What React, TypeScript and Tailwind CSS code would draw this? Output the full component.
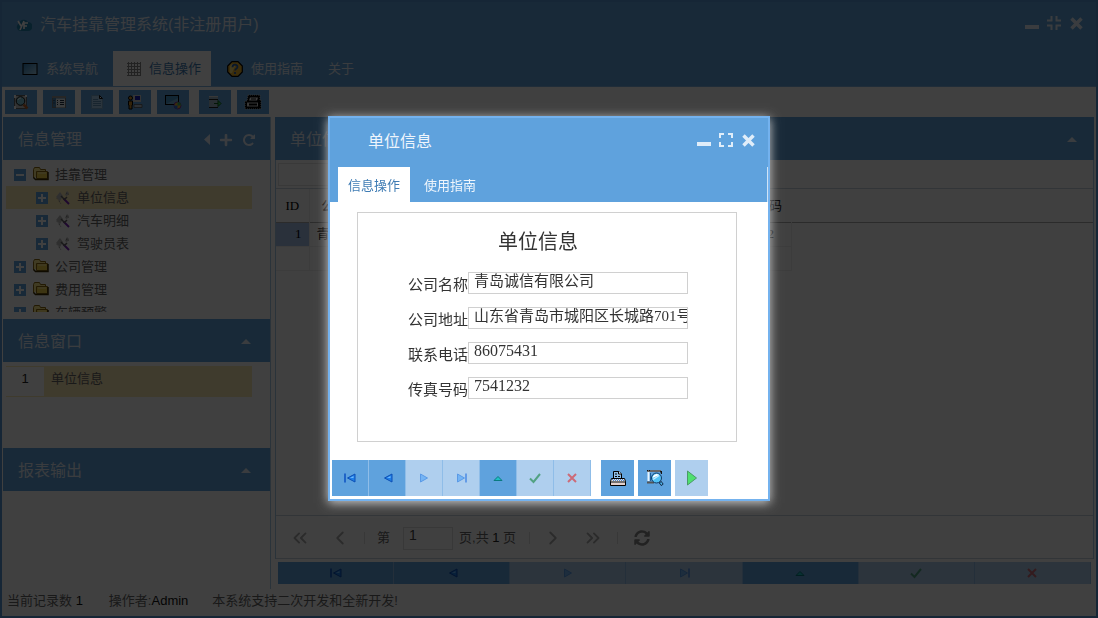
import React from 'react'
import clsx from 'clsx'
import { ChevronLeft, ChevronRight, ChevronsLeft, ChevronsRight } from 'lucide-react'
import { FaPlus, FaSyncAlt } from 'react-icons/fa'

const sans = "font-['Liberation_Sans','Noto_Sans_CJK_SC',sans-serif]"
const serif = "font-['Liberation_Serif','Noto_Sans_CJK_SC',serif]"

/* ---------- icons ---------- */

function MinimizeIcon() {
  return (
    <svg width="16" height="16" viewBox="0 0 16 16" aria-hidden="true">
      <rect x="1" y="10" width="14" height="4" fill="currentColor" />
    </svg>
  )
}

function ExpandIcon() {
  return (
    <svg width="16" height="16" viewBox="0 0 16 16" fill="none" stroke="currentColor" strokeWidth="2" aria-hidden="true">
      <path d="M6 2H2v4M10 2h4v4M6 14H2v-4M10 14h4v-4" />
    </svg>
  )
}

function RestoreIcon() {
  return (
    <svg width="16" height="16" viewBox="0 0 16 16" fill="none" stroke="currentColor" strokeWidth="2" aria-hidden="true">
      <path d="M1 5.500h4.500V1M15 5.500h-4.500V1M1 10.500h4.500V15M15 10.500h-4.500V15" />
    </svg>
  )
}

function CloseIcon() {
  return (
    <svg width="16" height="16" viewBox="0 0 16 16" stroke="currentColor" strokeWidth="3.500" aria-hidden="true">
      <path d="M3.500 3.500l10 10M13.500 3.500l-10 10" />
    </svg>
  )
}

function RepeatIcon() {
  return (
    <svg width="14" height="14" viewBox="0 0 1792 1792" fill="currentColor" aria-hidden="true">
      <path d="M1664 256v448q0 26-19 45t-45 19h-448q-42 0-59-40-17-39 14-69l138-138q-148-137-349-137-104 0-198.500 40.500t-163.500 109.500-109.500 163.500-40.500 198.500 40.500 198.500 109.500 163.500 163.500 109.500 198.500 40.500q119 0 225-52t179-147q7-10 23-12 15 0 25 9l137 138q9 8 9.500 20.500t-7.500 22.500q-109 132-264 204.500t-327 72.500q-156 0-298-61t-245-164-164-245-61-298 61-298 164-245 245-164 298-61q147 0 284.500 55.500t244.500 156.500l130-129q29-31 70-14 39 17 39 59z" />
    </svg>
  )
}

function LogoIcon() {
  return (
    <svg width="16" height="14" viewBox="0 0 16 14" aria-hidden="true">
      <path d="M4 13a4 4 0 0 1-1-7.500A5 5 0 0 1 12 4a4.500 4.500 0 0 1 0 9z" fill="#2384ae" />
      <path d="M2 3l3 5M8 3L4 12M8 11V5h4M8 8h3" stroke="#fff" strokeWidth="1.600" fill="none" />
    </svg>
  )
}

function ScreenIcon() {
  return (
    <svg width="16" height="16" viewBox="0 0 16 16" aria-hidden="true">
      <defs>
        <linearGradient id="screen" x1="0" y1="0" x2="1" y2="1">
          <stop offset="0" stopColor="#2c7cb8" />
          <stop offset="1" stopColor="#a8d4ee" />
        </linearGradient>
      </defs>
      <rect x="1" y="2.500" width="14" height="11" fill="url(#screen)" stroke="#000" />
    </svg>
  )
}

function GridIcon() {
  return (
    <svg width="14" height="14" viewBox="0 0 14 14" stroke="#888" aria-hidden="true">
      <path d="M1.500 0v14M4.500 0v14M7.500 0v14M10.500 0v14M13.500 0v14M0 1.500h14M0 4.500h14M0 7.500h14M0 10.500h14M0 13.500h14" />
    </svg>
  )
}

function HelpIcon() {
  return (
    <svg width="16" height="16" viewBox="0 0 16 16" aria-hidden="true">
      <path d="M5 .7h6L15.300 5v6L11 15.300H5L.7 11V5z" fill="#f0b428" stroke="#000" strokeWidth="1.200" />
      <path d="M5 3h4L5 12H3V5z" fill="#ffe27a" />
      <path d="M5.500 6.200c0-3.400 5-3.200 5-.3 0 1.700-2.400 1.800-2.400 3.700M8 11v2" fill="none" stroke="#2b5fa8" strokeWidth="1.800" />
    </svg>
  )
}

function PreviewIcon() {
  return (
    <svg width="16" height="16" viewBox="0 0 16 16" aria-hidden="true">
      <path d="M1.500 1.500h12v13h-12z" fill="#c8c8c8" stroke="#666" />
      <path d="M1 1h2v3H1zM1 12h2v3H1zM12 1h2v2h-2z" fill="#fff" />
      <circle cx="7.500" cy="7" r="4.300" fill="#7fc8dc" stroke="#111" />
      <path d="M5 6a3 3 0 0 1 3-2" fill="none" stroke="#fff" />
      <path d="M10.500 10.500l4 4" stroke="#b8622c" strokeWidth="2.500" />
    </svg>
  )
}

function FormIcon() {
  return (
    <svg width="14" height="12" viewBox="0 0 14 12" aria-hidden="true">
      <rect x=".5" y=".5" width="13" height="11" fill="#4d86b8" stroke="#777" />
      <path d="M0 1h14" stroke="#999" strokeWidth="2" />
      <path d="M4 2.500h9v9H4z" fill="#e8eef4" />
      <path d="M5 4.500h1M8 4.500h4M5 6.500h1M8 6.500h4M5 8.500h1M8 8.500h4M1.500 4.500h1M1.500 7h1" stroke="#234" />
    </svg>
  )
}

function PageIcon() {
  return (
    <svg width="14" height="16" viewBox="0 0 14 16" aria-hidden="true">
      <path d="M1.500 1.500h8l3 3v10h-11z" fill="#a7d0f0" stroke="#7aa8cc" />
      <path d="M9.500 1.500v3h3z" fill="#fff" stroke="#111" />
      <path d="M3 5.500h5M3 7.500h8M3 9.500h8M3 11.500h8" stroke="#5f93bc" />
    </svg>
  )
}

function UserPcIcon() {
  return (
    <svg width="16" height="16" viewBox="0 0 16 16" aria-hidden="true">
      <path d="M6 1h8v7H6z" fill="#d0d0d0" />
      <path d="M8 2h5v4H8z" fill="#1a1fb8" />
      <path d="M7 10.500h8v3H7z" fill="#b8c4d0" stroke="#555" strokeWidth=".8" />
      <circle cx="3.500" cy="4" r="2" fill="#c98a28" stroke="#000" />
      <path d="M1.500 7h4v4H5v4H2v-4h-.5z" fill="#c98a28" stroke="#000" />
    </svg>
  )
}

function ScreenSetIcon() {
  return (
    <svg width="18" height="16" viewBox="0 0 18 16" aria-hidden="true">
      <rect x="1.500" y="1.500" width="13" height="9" fill="#4a98cc" stroke="#000" />
      <path d="M2 10l12-6v6z" fill="#9fd0ec" opacity=".5" />
      <circle cx="13.500" cy="11.500" r="3.500" fill="#e8b030" stroke="#8030a0" />
      <path d="M13.500 11.500V8a3.500 3.500 0 0 1 3.500 3.500z" fill="#40b860" />
      <path d="M13.500 11.500V15a3.500 3.500 0 0 1-3.500-3.500z" fill="#2f70d8" />
    </svg>
  )
}

function ExportIcon() {
  return (
    <svg width="14" height="14" viewBox="0 0 14 14" aria-hidden="true">
      <path d="M1 1.500h9v11H1z" fill="#9fb8c8" />
      <path d="M1 1.500h9" stroke="#ddd" />
      <path d="M1 4.500h9M1 12.500h9" stroke="#222" />
      <path d="M6 8.500h4M10 5.500l3 3-3 3z" fill="#3bd45a" stroke="#0d5b1c" />
    </svg>
  )
}

function PrinterDarkIcon() {
  return (
    <svg width="18" height="16" viewBox="0 0 18 16" aria-hidden="true">
      <path d="M4 1h12v5h1v9H1V7h2z" fill="#000" stroke="#bbb" strokeDasharray="1 1" />
      <path d="M6 3.500h8l-1 3H5z" fill="#eee" />
      <path d="M7 5h5" stroke="#000" />
      <path d="M3 8.500h11v4H3z" fill="#ddd" />
      <path d="M5 10.500h8" stroke="#000" strokeWidth="2" />
    </svg>
  )
}

function PrintIcon() {
  return (
    <svg width="18" height="17" viewBox="0 0 18 17" aria-hidden="true">
      <path d="M4.500 8V1.500H10L12.500 4v4" fill="#8fbfe8" stroke="#000" />
      <path d="M9.500 1.500V4h3" fill="#fff" stroke="#000" />
      <path d="M6 4h2M6 6.500h2M9 6.500h2" stroke="#000" />
      <path d="M2.500 8.500h13l1 3v4h-15v-4z" fill="#e6e2e0" stroke="#000" />
      <path d="M3 9.500h12M4 10.500h12" stroke="#4a86d0" strokeDasharray="1 1" />
      <path d="M1 12h16" stroke="#000" />
      <path d="M2 14h14" stroke="#e0c0bc" />
    </svg>
  )
}

function ZoomPageIcon() {
  return (
    <svg width="18" height="18" viewBox="0 0 18 18" aria-hidden="true">
      <path d="M1 2h14" stroke="#666" strokeWidth="2" />
      <path d="M1 1h1v1H1zM3 1h1v1H3zM14 2h2v3h-1z" fill="#111" />
      <path d="M2.500 3v9" stroke="#e8f6ff" strokeWidth="2" />
      <path d="M4.500 4v8" stroke="#1d5f98" />
      <path d="M1 13.500h7" stroke="#555" strokeWidth="2" />
      <circle cx="10.500" cy="9" r="5" fill="#4fc0f4" stroke="#123a66" />
      <path d="M6.500 9a4 4 0 0 1 6.500-3z" fill="#fff" />
      <path d="M7 10.500l6-4" stroke="#c8ecff" strokeWidth="1.500" />
      <path d="M14 13l2.500 3" stroke="#0a1a30" strokeWidth="3" />
      <path d="M14.500 13.500l1.500 2" stroke="#4fb6f0" strokeWidth="1.500" />
    </svg>
  )
}

function FolderIcon() {
  return (
    <svg width="16" height="14" viewBox="0 0 16 14" aria-hidden="true">
      <path d="M.5 11V2.500l1-2h5l1 2h5v2" fill="#ffeb8a" stroke="#8a6a10" />
      <path d="M3.500 4.500h11v7h-11z" fill="#f4d44a" stroke="#8a6a10" />
      <path d="M.5 10.500l2 2h12.500V5" fill="none" stroke="#3d2d00" strokeWidth="1.500" />
      <path d="M5 6h8" stroke="#fff3b0" />
    </svg>
  )
}

function ToolIcon() {
  return (
    <svg width="14" height="14" viewBox="0 0 14 14" aria-hidden="true">
      <path d="M0 6l4-5 3 4-3 5zM9 4l2-4 2 2-2 3z" fill="#bbb" />
      <path d="M1 7.500l2 2M3 10l2 3M10 2l3 1.500" stroke="#777" strokeDasharray="1 1" />
      <path d="M7.500 7.500l5.500 5.500" stroke="#7a22b8" strokeWidth="2" />
      <path d="M5 5l3 3M11 6L8 9" stroke="#666" strokeWidth="1.500" />
    </svg>
  )
}

function CaretUp() {
  return (
    <svg width="10" height="5" viewBox="0 0 10 5" aria-hidden="true">
      <path d="M5 0l5 5H0z" fill="currentColor" />
    </svg>
  )
}

function CaretLeft() {
  return (
    <svg width="6" height="11" viewBox="0 0 6 11" aria-hidden="true">
      <path d="M6 0v11L0 5.500z" fill="currentColor" />
    </svg>
  )
}

type NavKind = 'first' | 'prev' | 'next' | 'last' | 'up' | 'ok' | 'cancel'

function NavIcon({ kind }: { kind: NavKind }) {
  const back = kind === 'first' || kind === 'prev'
  return (
    <svg width="12" height="12" viewBox="0 0 12 12" aria-hidden="true">
      {back && <path d="M11 2L3.500 6l7.500 4z" fill="#1f7fe8" stroke="#0d4fb4" />}
      {back && <path d="M9.500 4v2H6z" fill="#6db9ff" />}
      {kind === 'first' && <path d="M1 1.500v9" stroke="#0a4fc0" strokeWidth="1.500" />}
      {(kind === 'next' || kind === 'last') && <path d="M2.500 2l7 4-7 4z" fill="#74b4f4" stroke="#5a9ae6" />}
      {kind === 'last' && <path d="M11 1.500v9" stroke="#4a8ae4" strokeWidth="1.500" />}
      {kind === 'up' && <path d="M2 8.500L6 4.500l4 4z" fill="#1fc0c4" stroke="#0a7a80" />}
      {kind === 'ok' && <path d="M1 6.500l3.500 3.500L11 2" fill="none" stroke="#52a283" strokeWidth="2" />}
      {kind === 'cancel' && <path d="M2 2l8 8M10 2l-8 8" stroke="#cc6b78" strokeWidth="2" />}
    </svg>
  )
}

/* ---------- data ---------- */

const navItems: { kind: NavKind; label: string; disabled?: boolean }[] = [
  { kind: 'first', label: '首记录' },
  { kind: 'prev', label: '上一条' },
  { kind: 'next', label: '下一条', disabled: true },
  { kind: 'last', label: '末记录', disabled: true },
  { kind: 'up', label: '编辑' },
  { kind: 'ok', label: '保存', disabled: true },
  { kind: 'cancel', label: '取消', disabled: true },
]

const tree = [
  { label: '挂靠管理', open: true, children: ['单位信息', '汽车明细', '驾驶员表'] },
  { label: '公司管理', open: false, children: [] },
  { label: '费用管理', open: false, children: [] },
  { label: '车辆预警', open: false, children: [] },
]

const fields = [
  { id: 'name', label: '公司名称', value: '青岛诚信有限公司' },
  { id: 'address', label: '公司地址', value: '山东省青岛市城阳区长城路701号' },
  { id: 'phone', label: '联系电话', value: '86075431', numeric: true },
  { id: 'fax', label: '传真号码', value: '7541232', numeric: true },
]

const toolGroups = [
  [
    { label: '预览', icon: <PreviewIcon /> },
    { label: '表单', icon: <FormIcon /> },
    { label: '文档', icon: <PageIcon /> },
    { label: '用户', icon: <UserPcIcon /> },
    { label: '显示', icon: <ScreenSetIcon /> },
  ],
  [
    { label: '导出', icon: <ExportIcon /> },
    { label: '打印', icon: <PrinterDarkIcon /> },
  ],
]

/* ---------- pieces ---------- */

function NavBar({ className, buttonClass }: { className?: string; buttonClass: string }) {
  return (
    <div className={clsx('flex', className)}>
      {navItems.map((item) => (
        <button
          key={item.kind}
          aria-label={item.label}
          disabled={item.disabled}
          className={clsx(
            'flex items-center justify-center border-r border-[#8fbde8]',
            item.disabled ? 'bg-[#afcfee]' : 'bg-[#5fa2dd]',
            buttonClass
          )}
        >
          <NavIcon kind={item.kind} />
        </button>
      ))}
    </div>
  )
}

function PanelHeader({ title, children }: { title: string; children: React.ReactNode }) {
  return (
    <div className="flex h-[43px] shrink-0 items-center justify-between bg-[#5fa2dd] pl-[15px] pt-[2px] text-[#e6f0fa]">
      <h2 className="text-base leading-6">{title}</h2>
      {children}
    </div>
  )
}

function TreeToggle({ open }: { open?: boolean }) {
  return (
    <button aria-label={open ? '折叠' : '展开'} className="flex size-3 items-center justify-center bg-[#5fa2dd] text-white">
      <svg width="8" height="8" viewBox="0 0 8 8" stroke="currentColor" strokeWidth="2" aria-hidden="true">
        <path d={open ? 'M0 4h8' : 'M0 4h8M4 0v8'} />
      </svg>
    </button>
  )
}

function Tree() {
  return (
    <ul className="h-[152px] overflow-hidden pl-[3px] pr-[18px] pt-[3px] text-[13px] leading-[23px] text-[#666]">
      {tree.map((node) => (
        <li key={node.label}>
          <div className="flex h-[23px] items-center pl-2">
            <TreeToggle open={node.open} />
            <span className="ml-[7px] mr-[6px] pb-[2px]">
              <FolderIcon />
            </span>
            {node.label}
          </div>
          {node.children.length > 0 && (
            <ul>
              {node.children.map((child, i) => (
                <li key={child} className={clsx('flex h-[23px] items-center pl-[30px]', i === 0 && 'bg-[#fce9b4]')}>
                  <TreeToggle />
                  <span className="ml-2 mr-[7px]">
                    <ToolIcon />
                  </span>
                  {child}
                </li>
              ))}
            </ul>
          )}
        </li>
      ))}
    </ul>
  )
}

function Sidebar() {
  return (
    <aside className="flex w-[268px] shrink-0 flex-col border-r border-[#a9cbe8]">
      <PanelHeader title="信息管理">
        <div className="flex items-center gap-[9px] pr-[14px]">
          <button aria-label="收起">
            <CaretLeft />
          </button>
          <button aria-label="添加">
            <FaPlus size={14} />
          </button>
          <button aria-label="刷新">
            <RepeatIcon />
          </button>
        </div>
      </PanelHeader>
      <Tree />
      <div className="flex flex-1 flex-col pt-[7px]">
        <PanelHeader title="信息窗口">
          <button aria-label="折叠信息窗口" className="pr-[19px]">
            <CaretUp />
          </button>
        </PanelHeader>
        <div className="h-[86px] pl-[3px] pr-[18px] pt-1">
          <div className="flex h-[31px] border-y border-[#fce9b4] text-[13px] leading-6 text-[#666]">
            <span className="w-[38px] text-center text-[#222]">1</span>
            <span className="flex-1 bg-[#fce9b4] pl-[7px]">单位信息</span>
          </div>
        </div>
        <PanelHeader title="报表输出">
          <button aria-label="折叠报表输出" className="pr-[19px]">
            <CaretUp />
          </button>
        </PanelHeader>
      </div>
    </aside>
  )
}

function DataTable() {
  const cell = 'border-b border-r border-[#eee] px-[7px] font-normal'
  return (
    <table className="w-full table-fixed border-collapse text-left text-[13px] text-black">
      <colgroup>
        <col className="w-[33px]" />
        <col className="w-[76px]" />
        <col className="w-[226px]" />
        <col className="w-[110px]" />
        <col className="w-[70px]" />
        <col />
      </colgroup>
      <thead>
        <tr className="h-[33px] border-b border-b-[#aaa] text-center">
          <th className={clsx('border-r border-[#eee] font-normal', serif)}>ID</th>
          <th className="font-normal">公司名称</th>
          <th className="font-normal">公司地址</th>
          <th className="font-normal">联系电话</th>
          <th className="font-normal">传真号码</th>
          <th />
        </tr>
      </thead>
      <tbody className="whitespace-nowrap">
        <tr className="h-6">
          <td className={clsx(cell, 'bg-[#a9c4ea] text-right', serif)}>1</td>
          <td className={clsx(cell, 'overflow-hidden')}>青岛诚信有限公司</td>
          <td className={clsx(cell, 'overflow-hidden')}>山东省青岛市城阳区长城路701号</td>
          <td className={clsx(cell, serif)}>86075431</td>
          <td className={clsx(cell, serif)}>7541232</td>
          <td />
        </tr>
        <tr className="h-6">
          <td className={cell} />
          <td className={cell} />
          <td className={cell} />
          <td className={cell} />
          <td className={cell} />
          <td />
        </tr>
      </tbody>
    </table>
  )
}

function Pager() {
  return (
    <div className="flex h-[44px] items-center border-y border-[#c8d4de] pl-[13px] pt-[2px] text-[13px] text-[#666]">
      <button aria-label="首页" className="text-[#aaa]">
        <ChevronsLeft size={22} strokeWidth={2} />
      </button>
      <button aria-label="上一页" className="ml-[18px] text-[#aaa]">
        <ChevronLeft size={22} strokeWidth={2} />
      </button>
      <span className="ml-[13px] mr-3 h-3 border-l border-[#ddd]" />
      <label htmlFor="page">第</label>
      <input
        id="page"
        defaultValue="1"
        className="ml-[13px] mr-[6px] h-[23px] w-[50px] border border-[#e0e0e0] pb-[6px] pl-[5px] text-sm text-[#444]"
      />
      <span>
        页,共 <span className="text-[#222]">1</span> 页
      </span>
      <span className="ml-[13px] mr-3 h-3 border-l border-[#ddd]" />
      <button aria-label="下一页" className="text-[#aaa]">
        <ChevronRight size={22} strokeWidth={2} />
      </button>
      <button aria-label="末页" className="ml-[18px] text-[#aaa]">
        <ChevronsRight size={22} strokeWidth={2} />
      </button>
      <span className="ml-[13px] mr-4 h-3 border-l border-[#ddd]" />
      <button aria-label="重新加载" className="text-[#888]">
        <FaSyncAlt size={16} />
      </button>
    </div>
  )
}

function Workspace() {
  return (
    <main className="mb-[5px] ml-1 flex min-w-0 flex-1 flex-col">
      <PanelHeader title="单位信息">
        <button aria-label="折叠单位信息" className="pr-[17px]">
          <CaretUp />
        </button>
      </PanelHeader>
      <div className="flex flex-1 flex-col border-x border-[#a9cbe8]">
        <div className="border-b border-[#c8d4de] px-[2px] py-[2px]">
          <input aria-label="搜索" className="h-[23px] w-[180px] border border-[#e4e4e4]" />
        </div>
        <div className="flex-1">
          <DataTable />
        </div>
        <Pager />
      </div>
      <NavBar className="mt-[3px] px-[3px]" buttonClass="h-[22px] flex-1" />
    </main>
  )
}

function AppHeader() {
  return (
    <header className="border-b border-[#7fb4e4] bg-[#5fa2dd] text-[#e6f0fa]">
      <div className="flex h-[49px] items-center justify-between pb-1 pl-[14px] pr-3">
        <div className="flex items-center gap-2">
          <LogoIcon />
          <h1 className="text-base leading-6">汽车挂靠管理系统(非注册用户)</h1>
        </div>
        <div className="flex items-center gap-[6px] pb-1">
          <button aria-label="最小化">
            <MinimizeIcon />
          </button>
          <button aria-label="还原">
            <RestoreIcon />
          </button>
          <button aria-label="关闭">
            <CloseIcon />
          </button>
        </div>
      </div>
      <nav className="flex h-[35px] text-[13px]">
        <a href="#nav" className="flex items-center gap-2 pl-5 pr-[15px]">
          <ScreenIcon />
          系统导航
        </a>
        <a href="#info" className="flex items-center gap-2 bg-white pl-[14px] pr-[10px] text-[#3f7cb4]">
          <GridIcon />
          信息操作
        </a>
        <a href="#guide" className="flex items-center gap-2 pl-4 pr-[13px]">
          <HelpIcon />
          使用指南
        </a>
        <a href="#about" className="flex items-center px-3">
          关于
        </a>
      </nav>
    </header>
  )
}

function Toolbar() {
  return (
    <div className="flex h-[30px] gap-[10px] px-[3px] pt-[3px]">
      {toolGroups.map((group, i) => (
        <div key={i} className="flex gap-[6px]">
          {group.map((tool) => (
            <button key={tool.label} aria-label={tool.label} className="flex h-6 w-8 items-center justify-center bg-[#5fa2dd]">
              {tool.icon}
            </button>
          ))}
        </div>
      ))}
    </div>
  )
}

function Dialog() {
  return (
    <div
      role="dialog"
      aria-labelledby="dialog-title"
      className="w-[442px] border-2 border-[#74b2ee] bg-white shadow-[0_2px_10px_#cccccc]"
    >
      <div className="bg-[#5fa2dd] text-[#eef5fc]">
        <div className="flex h-[49px] items-center justify-between pb-[2px] pl-[38px] pr-3">
          <h2 id="dialog-title" className="text-base leading-6">
            单位信息
          </h2>
          <div className="flex items-center gap-[6px] pb-1 text-[#e0edf9]">
            <button aria-label="最小化">
              <MinimizeIcon />
            </button>
            <button aria-label="最大化">
              <ExpandIcon />
            </button>
            <button aria-label="关闭">
              <CloseIcon />
            </button>
          </div>
        </div>
        <nav className="flex h-[35px] border-r border-[#cfe3f6] pl-2 text-[13px]">
          <a href="#edit" className="flex items-center bg-white px-[10px] pt-[2px] text-[#3f7cb4]">
            信息操作
          </a>
          <a href="#help" className="flex items-center px-[14px] pt-[2px]">
            使用指南
          </a>
        </nav>
      </div>
      <form className="mb-[18px] ml-[27px] mr-[31px] mt-[10px] h-[230px] border border-[#d0d0d0] pt-[13px] text-[#333]">
        <h3 className="pr-[18px] text-center text-xl leading-8">单位信息</h3>
        <div className="mt-[14px] flex flex-col gap-[13px] pl-[50px]">
          {fields.map((field) => (
            <div key={field.id} className="flex h-[22px] items-center">
              <label htmlFor={field.id} className="w-[60px] whitespace-nowrap pt-1 text-[15px]">
                {field.label}
              </label>
              <input
                id={field.id}
                defaultValue={field.value}
                className={clsx(
                  'h-[22px] w-[220px] border border-[#d0d0d0] pb-1 pl-[5px] text-[#333]',
                  serif,
                  field.numeric ? 'text-base' : 'text-[15px]'
                )}
              />
            </div>
          ))}
        </div>
      </form>
      <div className="flex pb-[3px] pl-[2px]">
        <NavBar buttonClass="h-9 w-[37px]" />
        <div className="ml-[10px] flex gap-1">
          <button aria-label="打印" className="flex h-9 w-[33px] items-center justify-center bg-[#5fa2dd]">
            <PrintIcon />
          </button>
          <button aria-label="打印预览" className="flex h-9 w-[33px] items-center justify-center bg-[#5fa2dd]">
            <ZoomPageIcon />
          </button>
          <button aria-label="运行" disabled className="flex h-9 w-[33px] items-center justify-center bg-[#afcfee]">
            <svg width="12" height="16" viewBox="0 0 12 16" aria-hidden="true">
              <path d="M1.500 1v14l9-7z" fill="#4fe070" stroke="#4a9a68" />
            </svg>
          </button>
        </div>
      </div>
    </div>
  )
}

export default function App() {
  return (
    <div className={clsx('flex min-h-screen flex-col border-2 border-[#5798d6] bg-white', sans)}>
      <AppHeader />
      <Toolbar />
      <div className="flex flex-1 pl-[1px] pr-[2px]">
        <Sidebar />
        <Workspace />
      </div>
      <footer className="flex h-[27px] items-center pb-1 pl-[5px] text-[13px] text-[#666]">
        <span>
          当前记录数 <span className="text-[#111]">1</span>
        </span>
        <span className="ml-[26px]">
          操作者:<span className="text-[#111]">Admin</span>
        </span>
        <span className="ml-6">本系统支持二次开发和全新开发!</span>
      </footer>
      <div className="fixed inset-0 flex items-center justify-center bg-black/75 pb-px">
        <Dialog />
      </div>
    </div>
  )
}
